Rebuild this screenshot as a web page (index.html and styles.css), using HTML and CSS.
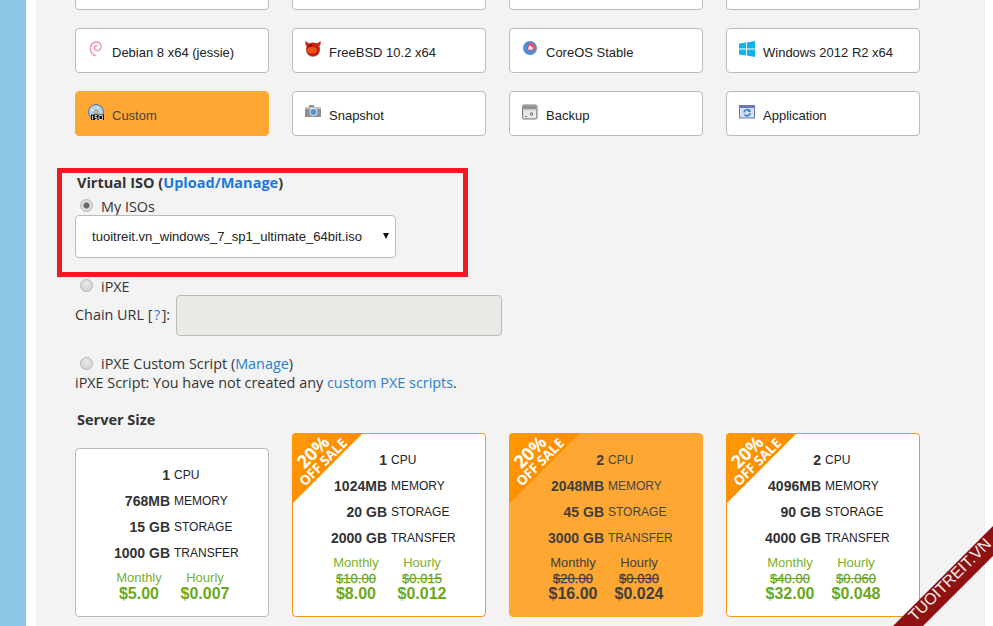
FILE: index.html
```html
<!DOCTYPE html>
<html lang="en">
<head>
<meta charset="utf-8">
<title>Deploy server</title>
<link rel="stylesheet" href="styles.css">
</head>
<body>
<div class="sidebar"></div>
<main class="main">
  <section class="os-grid">
    <div class="tile"></div><div class="tile"></div><div class="tile"></div><div class="tile"></div>
    <div class="tile">
      <svg class="ico" viewBox="0 0 16 16"><path d="M7.800 14.800C4.400 13.800 2 10.600 2.300 6.800 2.600 3 5.600.8 8.700 1c2.800.2 4.700 2.400 4.500 5-.2 2.400-2.100 3.800-4.100 3.600-1.700-.2-2.800-1.500-2.600-3 .2-1.300 1.300-2.100 2.400-1.900" fill="none" stroke="#f08fb0" stroke-width="1.400" stroke-linecap="round"/></svg>
      <span>Debian 8 x64 (jessie)</span>
    </div>
    <div class="tile">
      <svg class="ico" viewBox="0 0 16 16"><path d="M.5 0C0 2 .5 4 1.500 5.500L5 2.500C3.300 2 1.600 1.200.5 0zM15.500 0c.5 2 0 4-1 5.500L11 2.500c1.700-.5 3.400-1.300 4.500-2.500z" fill="#c9261c"/><circle cx="8" cy="9" r="7" fill="#a8a09c"/><circle cx="8" cy="8.400" r="6.800" fill="#c81d12"/><ellipse cx="7" cy="9.200" rx="4.800" ry="3.200" fill="#e8541a"/><path d="M3 5.500c1.500-1 3-1.300 4.500-1" stroke="#7b0d08" stroke-width="1.200" fill="none"/></svg>
      <span>FreeBSD 10.2 x64</span>
    </div>
    <div class="tile">
      <svg class="ico" viewBox="0 0 16 16"><circle cx="8" cy="7" r="7" fill="#4a90d2"/><path d="M8 1.500c2.800 0 5 2.400 5 5.200 0 1-.2 1.600-.5 2.100-1.500.6-3.500.7-5.500.7H4.600c.6-2.800 1.400-5.800 3.400-8z" fill="#ee4a5f"/><path d="M8.300 4.500c.5 0 1 .8 1 1.800h1.400v2.100H6.300c0-1.800.8-3.900 2-3.900z" fill="#fff"/></svg>
      <span>CoreOS Stable</span>
    </div>
    <div class="tile">
      <svg class="ico" viewBox="0 0 16 16"><path d="M0 2.600l7-1V7.600H0zM7.900 1.400L16 0v7.600H7.900zM0 8.400h7v6l-7-1zM7.900 8.400H16V16l-8.100-1.400z" fill="#0db4ec"/></svg>
      <span>Windows 2012 R2 x64</span>
    </div>
    <div class="tile selected">
      <svg class="ico" viewBox="0 0 16 16"><circle cx="8" cy="8" r="7.500" fill="#b4d0ea" stroke="#55708c"/><circle cx="8" cy="8" r="2" fill="#e9c65c" stroke="#6a7f95" stroke-width=".7"/><path d="M3 5l3 2M10 3l-1 2" stroke="#eef6fd" stroke-width="1.200"/><rect x="3" y="10.500" width="13" height="6" fill="#111"/><path d="M4.500 11.500v4M7 11.500H9M7 13.500H9M7 15.500H9M7 11.500V13.500M9 13.500V15.500M11 11.500H14.500V15.500H11z" stroke="#fff" stroke-width=".8" fill="none"/></svg>
      <span>Custom</span>
    </div>
    <div class="tile">
      <svg class="ico" viewBox="0 0 16 16"><path d="M0 3h3.500l1-2h4l1 2H16v10H0z" fill="#8d8f92"/><rect x="0" y="3" width="16" height="2" fill="#c0c2c4"/><circle cx="8.500" cy="8" r="4" fill="#dfe3e6"/><circle cx="8.500" cy="8" r="3" fill="#4e94e0"/></svg>
      <span>Snapshot</span>
    </div>
    <div class="tile">
      <svg class="ico" viewBox="0 0 16 16"><rect x=".5" y="1" width="14.500" height="14" rx="1.500" fill="#c9c9c9" stroke="#7a7a7a"/><rect x="1.500" y="2" width="12.500" height="3" fill="#8f8f8f"/><rect x="1.500" y="6.500" width="12.500" height="7.500" fill="#e9e9e9"/><circle cx="9.500" cy="10" r="1.300" fill="none" stroke="#666"/><rect x="3" y="12" width="2" height="1" fill="#777"/></svg>
      <span>Backup</span>
    </div>
    <div class="tile">
      <svg class="ico" viewBox="0 0 16 16"><rect x=".5" y="1.500" width="15" height="12.500" fill="#d7def3" stroke="#6a77bd"/><rect x="1" y="2" width="14" height="2" fill="#6a77bd"/><path d="M5 8.500a3 3 0 0 1 5.500-1.500M11 9a3 3 0 0 1-5.500 1.500" fill="none" stroke="#2f7ed0" stroke-width="1.500"/><path d="M11.500 5v3H8.500z" fill="#2f7ed0"/></svg>
      <span>Application</span>
    </div>
  </section>

  <section class="iso">
    <h3 class="heading">Virtual ISO (<a class="link" href="#">Upload/Manage</a>)</h3>
    <label class="choice"><input type="radio" name="iso" class="radio" checked>My ISOs</label>
    <div class="select-wrap">
      <select class="select"><option>tuoitreit.vn_windows_7_sp1_ultimate_64bit.iso</option></select>
      <span class="arrow"></span>
    </div>
    <label class="choice pxe"><input type="radio" name="iso" class="radio">iPXE</label>
    <div class="chain">
      <label class="chain-label" for="chain">Chain URL [<a class="link-plain help" href="#">?</a>]:</label>
      <input id="chain" class="chain-input" type="text" disabled>
    </div>
    <label class="choice script"><input type="radio" name="iso" class="radio">iPXE Custom Script (<a class="link-plain" href="#">Manage</a>)</label>
    <p class="note">iPXE Script: You have not created any <a class="link-plain" href="#">custom PXE scripts</a>.</p>
    <div class="highlight"></div>
  </section>

  <h3 class="heading size-heading">Server Size</h3>
  <section class="sizes">
    <article class="plan">
      <div class="spec"><b>1</b><span>CPU</span></div>
      <div class="spec"><b>768MB</b><span>MEMORY</span></div>
      <div class="spec"><b>15 GB</b><span>STORAGE</span></div>
      <div class="spec"><b>1000 GB</b><span>TRANSFER</span></div>
      <div class="prices">
        <div class="price"><span>Monthly</span><strong>$5.00</strong></div>
        <div class="price"><span>Hourly</span><strong>$0.007</strong></div>
      </div>
    </article>
    <article class="plan sale">
      <div class="ribbon"><span class="r1">20%</span><span class="r2">OFF SALE</span></div>
      <div class="spec"><b>1</b><span>CPU</span></div>
      <div class="spec"><b>1024MB</b><span>MEMORY</span></div>
      <div class="spec"><b>20 GB</b><span>STORAGE</span></div>
      <div class="spec"><b>2000 GB</b><span>TRANSFER</span></div>
      <div class="prices">
        <div class="price"><span>Monthly</span><s>$10.00</s><strong>$8.00</strong></div>
        <div class="price"><span>Hourly</span><s>$0.015</s><strong>$0.012</strong></div>
      </div>
    </article>
    <article class="plan sale active">
      <div class="ribbon"><span class="r1">20%</span><span class="r2">OFF SALE</span></div>
      <div class="spec"><b>2</b><span>CPU</span></div>
      <div class="spec"><b>2048MB</b><span>MEMORY</span></div>
      <div class="spec"><b>45 GB</b><span>STORAGE</span></div>
      <div class="spec"><b>3000 GB</b><span>TRANSFER</span></div>
      <div class="prices">
        <div class="price"><span>Monthly</span><s>$20.00</s><strong>$16.00</strong></div>
        <div class="price"><span>Hourly</span><s>$0.030</s><strong>$0.024</strong></div>
      </div>
    </article>
    <article class="plan sale">
      <div class="ribbon"><span class="r1">20%</span><span class="r2">OFF SALE</span></div>
      <div class="spec"><b>2</b><span>CPU</span></div>
      <div class="spec"><b>4096MB</b><span>MEMORY</span></div>
      <div class="spec"><b>90 GB</b><span>STORAGE</span></div>
      <div class="spec"><b>4000 GB</b><span>TRANSFER</span></div>
      <div class="prices">
        <div class="price"><span>Monthly</span><s>$40.00</s><strong>$32.00</strong></div>
        <div class="price"><span>Hourly</span><s>$0.060</s><strong>$0.048</strong></div>
      </div>
    </article>
  </section>
</main>
<div class="watermark"><span>TUOITREIT.VN</span></div>
</body>
</html>
```
FILE: styles.css
```css
* { box-sizing: border-box; }
html, body { height: 626px; overflow: hidden; }
body {
  margin: 0;
  background: #fff;
  display: flex;
  color: #333;
  font-family: "Open Sans", "Liberation Sans", sans-serif;
  font-size: 14.400px;
  position: relative;
}
.sidebar { width: 26px; flex: none; background: #8cc6e7; }
.main {
  width: 949px;
  margin-left: 10px;
  padding-left: 39px;
  background: #f3f3f3;
  border-right: 1px solid #ececec;
  height: 626px;
  overflow: hidden;
}
.os-grid {
  display: grid;
  grid-template-columns: repeat(4, 194px);
  grid-auto-rows: 45px;
  gap: 18px 23px;
  margin-top: -35px;
}
.tile {
  background: #fff;
  border: 1px solid #b4bcc4;
  border-radius: 4px;
  padding: 12px 0 0 12px;
  display: flex;
  align-items: flex-start;
  font-family: "Liberation Sans", Arial, sans-serif;
  font-size: 13px;
  color: #222;
}
.tile span { margin-left: 8px; padding-top: 4px; line-height: 16px; }
.ico { width: 16px; height: 16px; flex: none; }
.selected { background: #ffa733; border-color: #ffa733; color: #444; }

.iso { position: relative; padding-top: 39px; }
.heading { margin: 0 0 0 2px; font-size: 14.500px; line-height: 16px; font-weight: 700; color: #333; }
.link { color: #1a7ad9; text-decoration: none; }
.link-plain { color: #2a7fd0; text-decoration: none; }
.help { padding: 0 1.500px; }
.choice { display: flex; align-items: center; line-height: 18px; height: 18px; margin-top: 7px; }
.radio {
  appearance: none;
  width: 13px;
  height: 13px;
  margin: 0 8px 0 5px;
  position: relative;
  top: -2px;
  border-radius: 50%;
  border: 1px solid #b5b5b5;
  background: radial-gradient(circle at 50% 35%, #e8e8e8, #cfcfcf);
  flex: none;
}
.radio:checked { background: radial-gradient(circle, #666 0 2.5px, #dcdcdc 3.5px); }
.select-wrap { position: relative; width: 321px; height: 43px; margin-top: -1px; }
.select {
  appearance: none;
  width: 100%;
  height: 43px;
  padding: 0 30px 0 16px;
  border: 1px solid #bbb;
  border-radius: 4px;
  background: #fff;
  color: #222;
  font-family: "Liberation Sans", Arial, sans-serif;
  font-size: 13.100px;
}
.arrow {
  position: absolute;
  right: 7px;
  top: 18px;
  border-left: 3px solid transparent;
  border-right: 3px solid transparent;
  border-top: 6px solid #111;
}
.pxe { margin-top: 20px; }
.chain { display: flex; align-items: center; margin-top: -1px; height: 41px; }
.chain-label { width: 101px; flex: none; padding-bottom: 2px; }
.chain-input {
  width: 326px;
  height: 41px;
  background: #ebe9e3;
  border: 1px solid #bbb;
  border-radius: 4px;
}
.script { margin-top: 19px; }
.script .radio { top: -1px; }
.note { margin: 1px 0 0; line-height: 18px; }
.highlight {
  position: absolute;
  left: -18px;
  top: 32px;
  width: 411px;
  height: 109px;
  border: 5px solid #ed1c24;
}
.size-heading { margin-top: 20px; }

.sizes {
  display: grid;
  grid-template-columns: repeat(4, 194px);
  gap: 23px;
  align-items: start;
  margin-top: 5px;
}
.plan {
  position: relative;
  background: #fff;
  border: 1px solid #b4bcc4;
  border-radius: 4px;
  padding: 13px 0 14px;
  margin-top: 15px;
  font-family: "Liberation Sans", Arial, sans-serif;
  color: #333;
}
.sale { border-color: #f7941d; margin-top: 0; }
.active { background: #ffa733; border-color: #ffa733; color: #3f3f3f; }
.spec { display: grid; grid-template-columns: 94px 1fr; column-gap: 4px; height: 26px; line-height: 26px; }
.spec b { text-align: right; font-size: 14px; }
.spec span { font-size: 12px; color: #222; }
.active .spec span { color: #444; }
.prices { display: flex; margin: 4px 0 0 30px; color: #6aa820; }
.price { width: 66px; display: flex; flex-direction: column; align-items: center; }
.price span { font-size: 13px; line-height: 16px; color: #78b030; }
.price s { font-size: 13px; line-height: 15px; -webkit-text-stroke: 0.3px currentColor; }
.price strong { font-size: 16px; line-height: 16px; }
.active .prices, .active .price span { color: #3f3f3f; }

.ribbon {
  position: absolute;
  left: -1px;
  top: -1px;
  width: 71px;
  height: 71px;
  color: #fff;
  font-family: "Open Sans", sans-serif;
  font-weight: 700;
}
.ribbon::before {
  content: "";
  position: absolute;
  inset: 0;
  background: linear-gradient(135deg, #ff9a00, #fb8500);
  clip-path: polygon(3px 0, 100% 0, 0 100%, 0 3px, 1px 1px);
}
.ribbon span {
  position: absolute;
  white-space: nowrap;
  transform: translate(-50%, -50%) rotate(-45deg);
}
.r1 { font-size: 18px; line-height: 15px; left: 20.500px; top: 19px; }
.r2 { font-size: 13.500px; line-height: 12px; left: 31px; top: 29px; }

.watermark {
  position: absolute;
  left: 893px;
  top: 526px;
  width: 100px;
  height: 100px;
}
.watermark::before {
  content: "";
  position: absolute;
  inset: 0;
  background: linear-gradient(135deg, #7d0c0c, #9b1414);
  clip-path: polygon(100% 0, 100% 30%, 30% 100%, 0 100%);
}
.watermark span {
  position: absolute;
  left: -3px;
  top: 45px;
  width: 120px;
  text-align: center;
  font-family: "Liberation Sans", Arial, sans-serif;
  font-size: 16px;
  line-height: 18px;
  color: #f4f0ee;
  transform: rotate(-45deg);
}
```
